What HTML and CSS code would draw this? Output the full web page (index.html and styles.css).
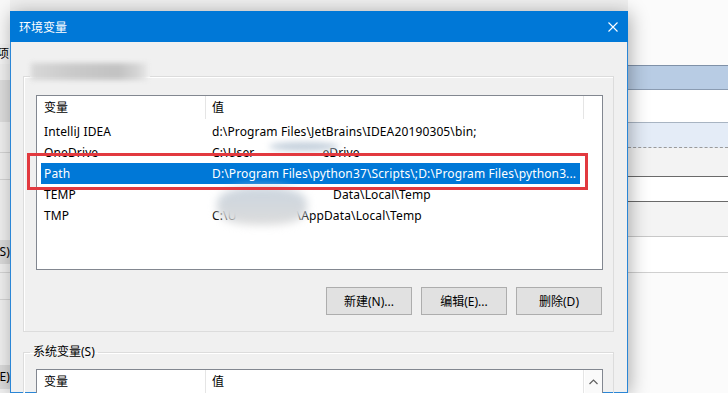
FILE: index.html
```html
<!DOCTYPE html>
<html lang="zh-CN">
<head>
    <meta charset="UTF-8">
    <meta name="viewport" content="width=device-width, initial-scale=1.0">
    <title>环境变量</title>
    <link rel="stylesheet" href="styles.css">
</head>
<body>
    <div class="desk">
        <div class="back back-left">
            <div class="bl-top"></div>
            <div class="bl-tab">项</div>
            <div class="bl-gap"></div>
            <div class="bl-band"></div>
            <div class="bl-row"></div>
            <div class="bl-row short"></div>
            <div class="bl-space"></div>
            <div class="bl-btn">(S)...</div>
            <div class="bl-row tiny"></div>
            <div class="bl-row short"></div>
            <div class="bl-space tall"></div>
            <div class="bl-btn">(E)...</div>
        </div>

        <div class="dialog">
            <div class="titlebar">
                <span class="title">环境变量</span>
                <button class="close" aria-label="关闭">
                    <svg width="10" height="10" viewBox="0 0 10 10"><path d="M0.5 0.5 L9.5 9.5 M9.5 0.5 L0.5 9.5" stroke="#fff" stroke-width="1.1" fill="none"/></svg>
                </button>
            </div>

            <div class="dialog-body">
                <fieldset class="group">
                    <legend><span class="smudge-label"></span></legend>
                    <div class="listview user-list">
                        <div class="lv-header">
                            <div class="lv-col col-name">变量</div>
                            <div class="lv-col col-value">值</div>
                        </div>
                        <div class="lv-rows">
                            <div class="lv-row">
                                <span class="cell-name">IntelliJ IDEA</span>
                                <span class="cell-value">d:\Program Files\JetBrains\IDEA20190305\bin;</span>
                            </div>
                            <div class="lv-row">
                                <span class="cell-name">OneDrive</span>
                                <span class="cell-value">C:\User<span class="gap gap-onedrive"></span>eDrive</span>
                            </div>
                            <div class="lv-row selected">
                                <span class="cell-name">Path</span>
                                <span class="cell-value">D:\Program Files\python37\Scripts\;D:\Program Files\python3...</span>
                            </div>
                            <div class="lv-row">
                                <span class="cell-name">TEMP</span>
                                <span class="cell-value"><span class="gap gap-temp"></span>Data\Local\Temp</span>
                            </div>
                            <div class="lv-row">
                                <span class="cell-name">TMP</span>
                                <span class="cell-value">C:\U<span class="gap gap-tmp"></span>\AppData\Local\Temp</span>
                            </div>
                        </div>
                        <div class="smudge smudge-top"></div>
                        <div class="smudge smudge-low"></div>
                        <div class="mark"></div>
                    </div>
                    <div class="buttons">
                        <button class="btn">新建(N)...</button>
                        <button class="btn">编辑(E)...</button>
                        <button class="btn">删除(D)</button>
                    </div>
                </fieldset>

                <fieldset class="group system">
                    <legend>系统变量(S)</legend>
                    <div class="listview sys-list">
                        <div class="lv-header">
                            <div class="lv-col col-name">变量</div>
                            <div class="lv-col col-value">值</div>
                        </div>
                        <div class="scrollbar">
                            <svg width="9" height="6" viewBox="0 0 9 6"><path d="M0.5 5 L4.5 1 L8.5 5" stroke="#606060" stroke-width="1.2" fill="none"/></svg>
                        </div>
                    </div>
                </fieldset>
            </div>
        </div>

        <div class="back back-right">
            <div class="br-top"></div>
            <div class="br-head"></div>
            <div class="br-row r1"></div>
            <div class="br-row r2"></div>
            <div class="br-row r3"></div>
            <div class="br-row r4"></div>
            <div class="br-row r5"></div>
            <div class="br-row r6"></div>
        </div>
    </div>
</body>
</html>
```

FILE: styles.css
```css
* {
    box-sizing: border-box;
}

body {
    margin: 0;
    width: 728px;
    height: 393px;
    overflow: hidden;
    background-color: #f0f0f0;
    font-family: "Noto Sans", "Noto Sans CJK SC", sans-serif;
    font-size: 12px;
    color: #000;
}

.desk {
    display: flex;
    height: 393px;
}

/* window behind, left edge */
.back-left {
    width: 10px;
    flex: none;
    overflow: hidden;
    background-color: #f0f0f0;
    white-space: nowrap;
}

.bl-top {
    height: 44px;
    background-color: #f8f8f8;
}

.bl-tab {
    height: 20px;
    line-height: 20px;
    text-indent: -3px;
    background-color: #f4f4f4;
}

.bl-gap {
    height: 16px;
}

.bl-band {
    height: 42px;
    background-color: #dedede;
}

.bl-row {
    height: 31px;
    border-bottom: 1px solid #d4d4d4;
}

.bl-row.short {
    height: 27px;
}

.bl-row.tiny {
    height: 9px;
}

.bl-space {
    height: 60px;
}

.bl-space.tall {
    height: 65px;
}

.bl-btn {
    height: 24px;
    line-height: 24px;
    text-indent: -4px;
    background-color: #dadada;
}

/* dialog */
.dialog {
    width: 618px;
    flex: none;
    margin-top: 11px;
    position: relative;
    z-index: 1;
    background-color: #f0f0f0;
    border: 1px solid #2a86d6;
    border-top: none;
    box-shadow: 2px 2px 18px rgba(0, 0, 0, 0.32);
}

.titlebar {
    height: 31px;
    margin: 0 -1px;
    padding-left: 9px;
    display: flex;
    align-items: center;
    justify-content: space-between;
    background-color: #0078d7;
    color: white;
}

.close {
    width: 31px;
    height: 31px;
    border: none;
    padding: 0;
    background: transparent;
    display: flex;
    align-items: center;
    justify-content: center;
}

.dialog-body {
    padding: 26px 13px 0 12px;
}

.group {
    margin: 0;
    padding: 11px 10px 16px 12px;
    min-width: 0;
    border: 1px solid #dcdcdc;
    box-shadow: inset 1px 1px 0 #fff;
}

.group legend {
    margin-left: -6px;
    padding: 0 3px;
    height: 16px;
    line-height: 16px;
}

.group.system {
    margin-top: 12px;
    padding-top: 9px;
}

.smudge-label {
    display: block;
    width: 116px;
    height: 17px;
    margin-top: -5px;
    margin-left: -2px;
    background: linear-gradient(to right, #d8d8d8, #cacaca 35%, #c2c2c2 75%, #d2d2d2 90%, #e6e6e6);
    filter: blur(2.5px);
}

.listview {
    position: relative;
    background-color: white;
    border: 1px solid #828790;
}

.user-list {
    height: 175px;
}

.sys-list {
    height: 60px;
}

.lv-header {
    display: flex;
    height: 23px;
    line-height: 23px;
}

.lv-col {
    border-right: 1px solid #e5e5e5;
}

.col-name {
    width: 169px;
    padding-left: 7px;
}

.col-value {
    width: 378px;
    padding-left: 6px;
}

.lv-rows {
    padding-top: 2px;
}

.lv-row {
    display: flex;
    width: 539px;
    height: 21px;
    line-height: 21px;
    margin-left: 4px;
    white-space: nowrap;
    letter-spacing: 0.13px;
}

.lv-row.selected {
    background-color: #0078d7;
    color: white;
}

.cell-name {
    width: 164px;
    padding-left: 3px;
    flex: none;
}

.cell-value {
    flex: 1;
    padding-left: 7px;
    overflow: hidden;
}

.gap {
    display: inline-block;
}

.gap-onedrive {
    width: 68px;
}

.gap-temp {
    width: 121px;
}

.gap-tmp {
    width: 60px;
}

.smudge {
    position: absolute;
    border-radius: 50%;
}

.smudge-top {
    left: 232px;
    top: 46px;
    width: 70px;
    height: 9px;
    background-color: #c4d0dc;
    filter: blur(3px);
}

.smudge-low {
    left: 180px;
    top: 91px;
    width: 90px;
    height: 38px;
    border-radius: 40%;
    background: linear-gradient(to bottom, #cbd5df, #dcdcdc);
    filter: blur(4px);
}

.mark {
    position: absolute;
    left: -10px;
    top: 57px;
    width: 561px;
    height: 37px;
    border: 3px solid #e2393f;
}

.scrollbar {
    position: absolute;
    top: 0;
    right: 0;
    width: 17px;
    height: 100%;
    display: flex;
    justify-content: center;
    padding-top: 9px;
    background-color: #fafafa;
}

.buttons {
    display: flex;
    justify-content: flex-end;
    gap: 9px;
    margin-top: 17px;
    margin-right: 1px;
}

.btn {
    width: 86px;
    height: 28px;
    padding: 0;
    font-family: inherit;
    font-size: 12px;
    color: #000;
    background-color: #e1e1e1;
    border: 1px solid #adadad;
}

/* window behind, right side */
.back-right {
    flex: 1;
    background-color: #fbfbfb;
}

.br-top {
    height: 65px;
}

.br-head {
    height: 25px;
    background-color: #b8cce4;
    border-top: 1px solid #7f91a8;
    border-bottom: 1px solid #8b9cb2;
}

.br-row.r1 {
    height: 33px;
    background-color: #fff;
    border-bottom: 1px solid #a8b4c2;
}

.br-row.r2 {
    height: 25px;
    background-color: #e4ecf7;
    border-bottom: 1px dashed #9a9a9a;
}

.br-row.r3 {
    height: 29px;
    background-color: #f3f3f3;
    border-bottom: 1px solid #6a6a6a;
}

.br-row.r4 {
    height: 25px;
    background-color: #fff;
    border-bottom: 1px solid #6a6a6a;
}

.br-row.r5 {
    height: 35px;
    background-color: #f4f4f4;
    border-bottom: 1px solid #c8c8c8;
}

.br-row.r6 {
    height: 36px;
    background-color: #fff;
    border-bottom: 1px solid #d0d0d0;
}
```
